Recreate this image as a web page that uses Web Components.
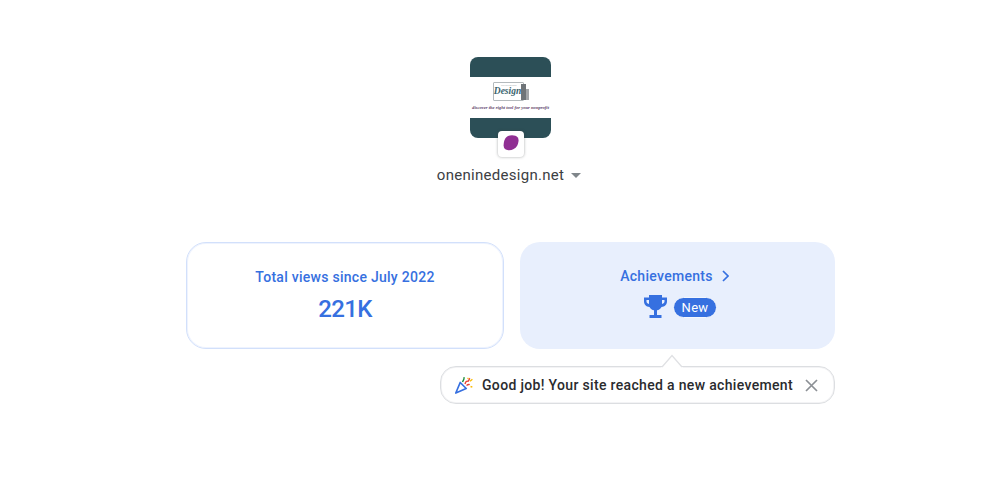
<!DOCTYPE html>
<html lang="en">
<head>
<meta charset="utf-8">
<title>Search Console insights</title>
<style>
  html, body { margin: 0; background: #fff; }
  body { font-family: Roboto, "Liberation Sans", sans-serif; }
</style>
</head>
<body>
<insights-page>
  <site-header slot="header" name="oneninedesign.net"></site-header>
  <stat-card slot="left" title="Total views since July 2022" value="221K"></stat-card>
  <achievements-card slot="right"></achievements-card>
  <achievement-tip slot="tip">Good job! Your site reached a new achievement</achievement-tip>
</insights-page>

<script>
class InsightsPage extends HTMLElement {
  constructor() {
    super();
    this.attachShadow({ mode: 'open' }).innerHTML = `
      <style>
        :host { display: block; width: 1000px; height: 492px; box-sizing: border-box; padding-top: 57px; }
        .cards { display: grid; grid-template-columns: 318px 315px; gap: 16px; margin: 58px 0 0 186px; width: 649px; }
        .tip { margin: 17px 0 0 440px; width: 395px; }
      </style>
      <slot name="header"></slot>
      <div class="cards">
        <slot name="left"></slot>
        <slot name="right"></slot>
      </div>
      <div class="tip"><slot name="tip"></slot></div>`;
  }
}
customElements.define('insights-page', InsightsPage);

class SiteHeader extends HTMLElement {
  connectedCallback() {
    this.attachShadow({ mode: 'open' }).innerHTML = `
      <style>
        :host { display: flex; flex-direction: column; align-items: center; margin-left: 21px; }
        .thumb { position: relative; width: 81px; height: 81px; }
        .shot { width: 81px; height: 81px; border-radius: 8px; overflow: hidden; background: #2c4f57;
                display: flex; flex-direction: column; }
        .band { height: 20px; flex: none; }
        .logo { height: 41px; flex: none; background: #fff; display: flex; flex-direction: column; align-items: center; }
        .mark { width: 31px; height: 19px; margin: 5px 4px 0 0; border: 1px solid #b4babd; border-radius: 1px; box-sizing: border-box;
                position: relative; display: flex; flex-direction: column; align-items: center; }
        .small { font: 3px/3px "Liberation Sans", sans-serif; color: #a9b0b3; margin-top: 1px; white-space: nowrap; transform: scale(.8); }
        .script { font: italic 700 9.5px/10px "Liberation Serif", serif; color: #3a646e; margin: -1px 2px 0 0; }
        .tower { position: absolute; left: 27px; top: 1px; width: 5px; height: 16px; background: #6f7478; }
        .tower2 { position: absolute; left: 32px; top: 6px; width: 3px; height: 11px; background: #a2a5a8; }
        .tag { font: italic 700 4.6px/6px "Liberation Serif", serif; color: #5d4068; margin-top: 4px; white-space: nowrap; }
        .fav { position: absolute; left: 28px; top: 74px; width: 26px; height: 26px; box-sizing: border-box; background: #fff;
               border-radius: 4px; box-shadow: 0 0 3px rgba(60,64,67,.45); display: flex; align-items: center; justify-content: center; }
        .fav svg { margin-bottom: 3px; }
        .name { display: flex; align-items: center; gap: 7px; margin: 28px 3px 0 0; height: 18px;
                font: 15px/18px Roboto, sans-serif; letter-spacing: .28px; color: #3c4043; }
      </style>
      <div class="thumb">
        <div class="shot">
          <div class="band"></div>
          <div class="logo">
            <div class="mark">
              <span class="small">oneninedesign</span>
              <span class="script">Design</span>
              <i class="tower"></i><i class="tower2"></i>
            </div>
            <div class="tag">discover the right tool for your nonprofit</div>
          </div>
          <div class="band"></div>
        </div>
        <div class="fav">
          <svg width="16" height="16" viewBox="0 0 16 16"><path d="M5 1C8-.2 13 0 14.800 2.500c1.400 2 .6 6-.8 8.500-1.500 2.600-5 4.400-8.500 4.200C2.500 15 .6 13.500.6 10.500.6 6.500 2 2.400 5 1z" fill="#902f93"/></svg>
        </div>
      </div>
      <div class="name">
        <span>${this.getAttribute('name')}</span>
        <svg width="10" height="5" viewBox="0 0 10 5"><path d="M0 0h10L5 5z" fill="#80868b"/></svg>
      </div>`;
  }
}
customElements.define('site-header', SiteHeader);

class StatCard extends HTMLElement {
  connectedCallback() {
    this.attachShadow({ mode: 'open' }).innerHTML = `
      <style>
        :host { display: flex; flex-direction: column; align-items: center; box-sizing: border-box; height: 107px;
                border: 1px solid #d2e0fb; box-shadow: inset 0 0 0 1px #eef3fe; border-radius: 20px; color: #3670e0; background: #fff; }
        .t { font: 500 14px/20px Roboto, sans-serif; letter-spacing: .27px; margin-top: 24px; }
        .v { font: 500 24px/28px Roboto, sans-serif; margin-top: 8px; letter-spacing: -.6px; }
      </style>
      <div class="t">${this.getAttribute('title')}</div>
      <div class="v">${this.getAttribute('value')}</div>`;
  }
}
customElements.define('stat-card', StatCard);

class AchievementsCard extends HTMLElement {
  connectedCallback() {
    this.attachShadow({ mode: 'open' }).innerHTML = `
      <style>
        :host { display: flex; flex-direction: column; align-items: center; box-sizing: border-box; height: 107px;
                border-radius: 20px; background: #e8effd; color: #3670e0; }
        .head { display: flex; align-items: center; gap: 9px; margin: 24px 6px 0 0; height: 20px;
                font: 500 14px/20px Roboto, sans-serif; letter-spacing: .3px; }
        .row { display: flex; align-items: center; gap: 5px; margin: 8px 0 0 5px; }
        .new { box-sizing: border-box; background: #3670e0; color: #fff; border: 1px solid #f4f7fe; border-radius: 11px; height: 21px; padding: 0 7.500px;
               margin-top: 1px; font: 400 13px/19px Roboto, sans-serif; letter-spacing: .3px; }
      </style>
      <div class="head">
        <span>Achievements</span>
        <svg width="7" height="12" viewBox="0 0 7 12"><path d="M1 1l5 5-5 5" fill="none" stroke="#3670e0" stroke-width="1.700"/></svg>
      </div>
      <div class="row">
        <svg width="25" height="25" viewBox="0 0 25 25"><path fill="#3670e0" fill-rule="evenodd" d="M6 1h13v2.500h5v4c0 3-2.200 5.300-5.500 5.500-1 1.800-2.700 3-4.500 3.300V21h4.500v3h-12v-3H11v-4.700c-1.800-.3-3.500-1.500-4.500-3.300C3.200 12.800 1 10.500 1 7.500v-4h5V1zM3.500 6v1.500c0 1 .8 2 2.500 2.500V6H3.500zM19 6v4c1.700-.5 2.500-1.500 2.500-2.500V6H19z"/></svg>
        <span class="new">New</span>
      </div>`;
  }
}
customElements.define('achievements-card', AchievementsCard);

class AchievementTip extends HTMLElement {
  constructor() {
    super();
    this.attachShadow({ mode: 'open' }).innerHTML = `
      <style>
        :host { display: flex; position: relative; align-items: center; box-sizing: border-box; height: 38px; padding: 0 16px 0 14px;
                border: 1px solid #dcdee1; box-shadow: inset 0 0 0 1px #f3f3f5; border-radius: 16px; background: #fff; color: #2a2b2e;
                font: 500 14px/20px Roboto, sans-serif; letter-spacing: .33px; }
        .arrow { position: absolute; left: 220px; top: -13px; display: block; }
        .text { margin-left: 9px; white-space: nowrap; }
        .close { margin-left: auto; display: flex; }
        svg { flex: none; }
      </style>
      <svg class="arrow" width="22" height="14" viewBox="0 0 22 14"><path d="M0 14L11 1l11 13z" fill="#fff"/><path d="M1 13L11 1.500 21 13" fill="none" stroke="#e0e1e4" stroke-width="1.300"/></svg>
      <svg width="18" height="18" viewBox="0 0 18 18">
        <path d="M5.200 6.500l6 6L.8 17z" fill="none" stroke="#3670e0" stroke-width="1.700" stroke-linejoin="round"/>
        <path d="M7.500 6C8 4.500 9.500 4 9 1.200" fill="none" stroke="#1e8e3e" stroke-width="1.400"/>
        <path d="M10 8c.6-2.400 2.200-3 3-2.800.8.200 1-2 1.800-3" fill="none" stroke="#ea4335" stroke-width="1.400"/>
        <path d="M11.500 9.500c1.200-1 2.300-1.300 3.200-.8" fill="none" stroke="#ea4335" stroke-width="1.400"/>
        <path d="M12.500 2.800l1-.9M15 5.200l2.400-2" fill="none" stroke="#fbbc04" stroke-width="1.400"/>
        <path d="M15.500 10.500l1.800.5" fill="none" stroke="#fbbc04" stroke-width="1.400"/>
      </svg>
      <span class="text"><slot></slot></span>
      <span class="close">
        <svg width="13" height="13" viewBox="0 0 13 13"><path d="M1 1l11 11M12 1L1 12" stroke="#8c9095" stroke-width="1.700" fill="none"/></svg>
      </span>`;
  }
}
customElements.define('achievement-tip', AchievementTip);
</script>
</body>
</html>
